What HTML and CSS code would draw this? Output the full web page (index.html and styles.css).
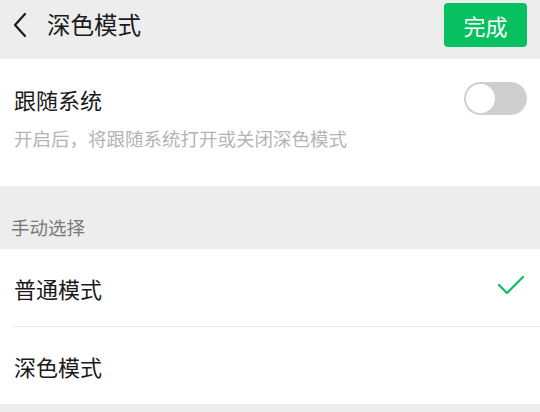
FILE: index.html
```html
<!DOCTYPE html>
<html lang="zh">
<head>
<meta charset="utf-8">
<link rel="stylesheet" href="styles.css">
</head>
<body>
<div class="header">
  <div class="back">
    <svg width="16" height="26" viewBox="0 0 16 26"><path d="M13 2 L3 13 L13 24" fill="none" stroke="#1a1a1a" stroke-width="2.2" stroke-linecap="round" stroke-linejoin="round"/></svg>
  </div>
  <div class="title">深色模式</div>
  <div class="done">完成</div>
</div>
<div class="section follow">
  <div class="follow-row">
    <div class="label">跟随系统</div>
    <div class="toggle"><div class="knob"></div></div>
  </div>
  <div class="desc">开启后，将跟随系统打开或关闭深色模式</div>
</div>
<div class="group-title">手动选择</div>
<div class="section list">
  <div class="row">
    <div class="label">普通模式</div>
    <svg class="check" width="28" height="20" viewBox="0 0 28 20"><path d="M2 10 L10 18 L26 2" fill="none" stroke="#07c160" stroke-width="2.2" stroke-linecap="round" stroke-linejoin="round"/></svg>
  </div>
  <div class="divider"></div>
  <div class="row">
    <div class="label">深色模式</div>
  </div>
</div>
</body>
</html>
```
FILE: styles.css
```css
* { box-sizing: border-box; }
body {
  margin: 0;
  background: #ededed;
  font-family: "Noto Sans CJK SC", "Noto Sans", sans-serif;
  color: #1a1a1a;
  width: 540px;
  height: 412px;
  overflow: hidden;
}
.header {
  height: 59px;
  display: flex;
  align-items: flex-start;
  padding: 3px 13px 0 12px;
  background: #ededed;
}
.back {
  height: 44px;
  width: 35px;
  display: flex;
  align-items: center;
  padding-top: 0;
}
.title {
  height: 44px;
  line-height: 44px;
  font-size: 23.5px;
  flex: 1;
  margin-top: -1px;
}
.done {
  width: 83px;
  height: 44px;
  background: #07c160;
  border-radius: 4px;
  color: #fff;
  font-size: 22px;
  line-height: 44px;
  text-align: center;
}
.section { background: #fff; }
.follow {
  height: 127px;
  padding: 22px 13px 0 14px;
}
.follow-row {
  display: flex;
  justify-content: space-between;
  align-items: center;
  height: 35px;
}
.label {
  font-size: 22px;
  line-height: 30px;
}
.toggle {
  width: 63px;
  height: 33px;
  border-radius: 17px;
  background: #cfcfcf;
  padding: 2px;
}
.knob {
  width: 29px;
  height: 29px;
  border-radius: 50%;
  background: #fff;
}
.desc {
  margin-top: 8px;
  font-size: 18.5px;
  line-height: 28px;
  color: #b4b4b4;
}
.group-title {
  height: 63px;
  padding: 28px 0 0 11px;
  font-size: 18.5px;
  line-height: 26px;
  color: #7a7a7a;
}
.list { }
.row {
  height: 77px;
  display: flex;
  align-items: center;
  justify-content: space-between;
  padding: 0 15px 0 14px;
}
.check { margin-top: -6px; }
.divider {
  height: 1px;
  margin-left: 14px;
  background: #e8e8e8;
}
```
